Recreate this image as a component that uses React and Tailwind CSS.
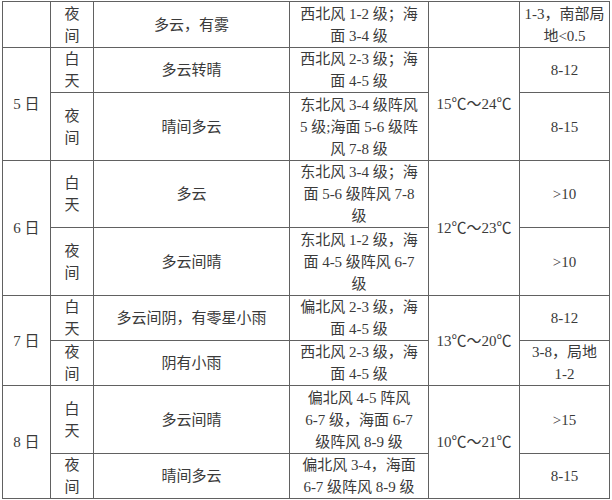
import React from 'react';

// forecast rows: date cell and temperature cell span two rows
const rows = [
    { h: 'h-[46px]', period: '夜间', weather: '多云，有雾', wind: ['西北风 1-2 级；海', '面 3-4 级'], vis: ['1-3，南部局', '地<0.5'] },
    { h: 'h-[45px]', date: '5 日', span: 2, temp: '15℃～24℃', period: '白天', weather: '多云转晴', wind: ['西北风 2-3 级；海', '面 4-5 级'], vis: ['8-12'] },
    { h: 'h-[68px]', period: '夜间', weather: '晴间多云', wind: ['东北风 3-4 级阵风', '5 级;海面 5-6 级阵', '风 7-8 级'], vis: ['8-15'] },
    { h: 'h-[67px]', date: '6 日', span: 2, temp: '12℃～23℃', period: '白天', weather: '多云', wind: ['东北风 3-4 级；海', '面 5-6 级阵风 7-8', '级'], vis: ['>10'] },
    { h: 'h-[68px]', period: '夜间', weather: '多云间晴', wind: ['东北风 1-2 级，海', '面 4-5 级阵风 6-7', '级'], vis: ['>10'] },
    { h: 'h-[45px]', date: '7 日', span: 2, temp: '13℃～20℃', period: '白天', weather: '多云间阴，有零星小雨', wind: ['偏北风 2-3 级，海', '面 4-5 级'], vis: ['8-12'] },
    { h: 'h-[45px]', period: '夜间', weather: '阴有小雨', wind: ['西北风 2-3 级，海', '面 4-5 级'], vis: ['3-8，局地', '1-2'] },
    { h: 'h-[68px]', date: '8 日', span: 2, temp: '10℃～21℃', period: '白天', weather: '多云间晴', wind: ['偏北风 4-5 阵风', '6-7 级，海面 6-7', '级阵风 8-9 级'], vis: ['>15'] },
    { h: 'h-[44px]', period: '夜间', weather: '晴间多云', wind: ['偏北风 3-4，海面', '6-7 级阵风 8-9 级'], vis: ['8-15'] },
];

const cell = 'border border-[#616161] text-center align-middle p-0';

const Lines = ({ items }) => items.map((t, i) => (
    <React.Fragment key={i}>{i > 0 && <br />}{t}</React.Fragment>
));

export default function App() {
    return (
        <div className="w-[612px] h-[500px] bg-white overflow-hidden pt-px pl-[2px]"
            style={{ fontFamily: "'Liberation Serif', 'Noto Sans CJK SC', serif" }}>
            <table className="w-[608px] table-fixed border-collapse text-[15px] leading-[22px] text-[#3a3a3a]">
                <colgroup>
                    <col className="w-[48px]" />
                    <col className="w-[43px]" />
                    <col className="w-[196px]" />
                    <col className="w-[139px]" />
                    <col className="w-[91px]" />
                    <col className="w-[90px]" />
                </colgroup>
                <tbody>
                    {rows.map((r, i) => (
                        <tr key={i} className={r.h}>
                            {i === 0 && <td className={cell}></td>}
                            {r.date && <td rowSpan={r.span} className={cell}>{r.date}</td>}
                            <td className={cell}>
                                <Lines items={[r.period[0], r.period[1]]} />
                            </td>
                            <td className={cell}>{r.weather}</td>
                            <td className={cell}><Lines items={r.wind} /></td>
                            {i === 0 && <td className={cell}></td>}
                            {r.temp && <td rowSpan={r.span} className={cell}>{r.temp}</td>}
                            <td className={cell}><Lines items={r.vis} /></td>
                        </tr>
                    ))}
                </tbody>
            </table>
        </div>
    );
}
